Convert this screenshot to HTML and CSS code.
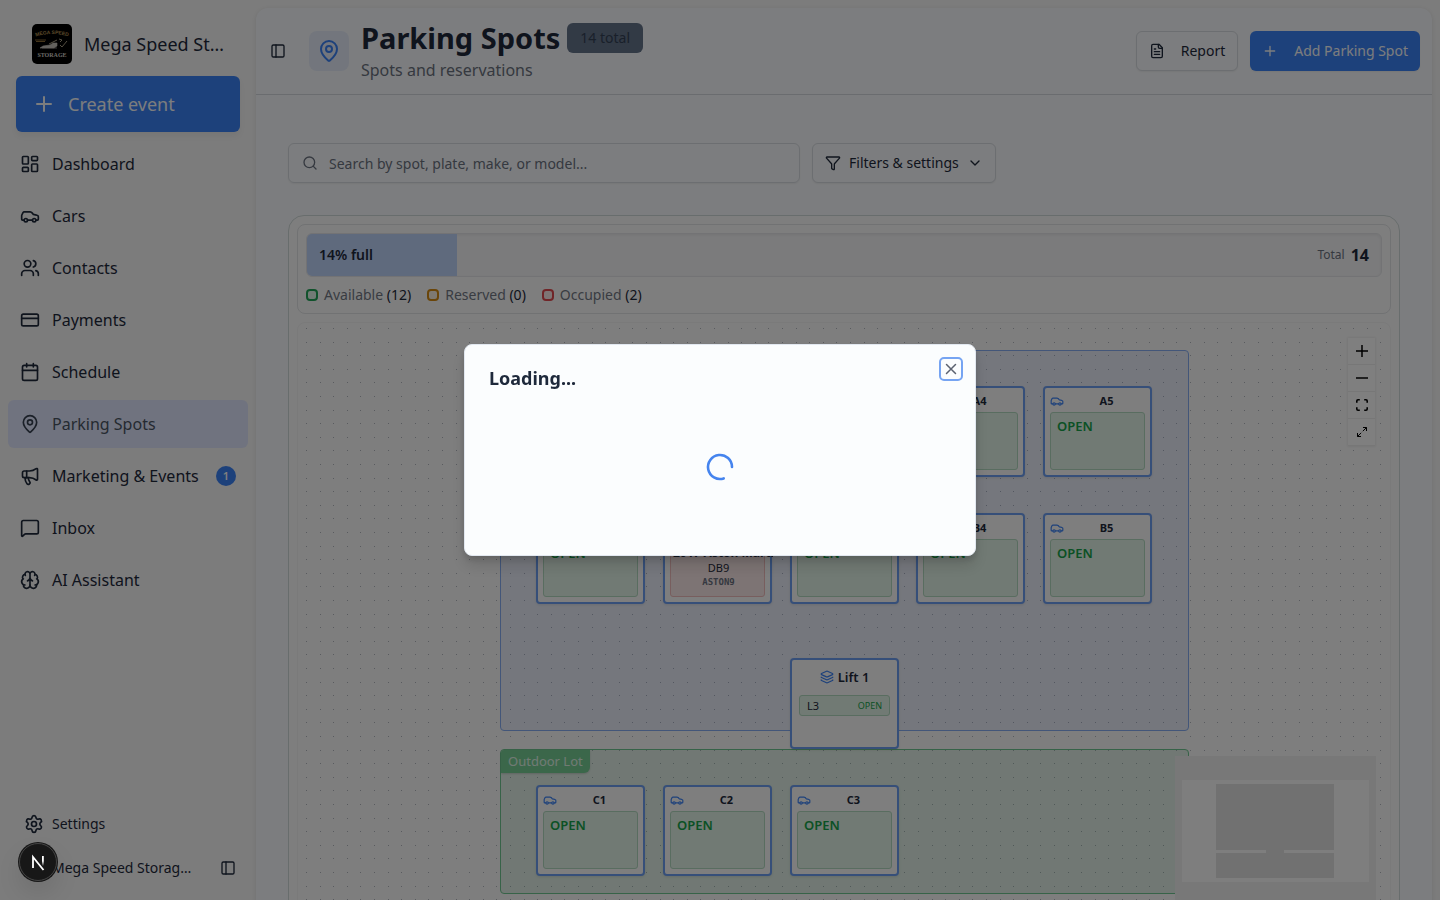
FILE: index.html
```html
<!DOCTYPE html>
<html lang="en">
<head>
<meta charset="utf-8">
<meta name="viewport" content="width=device-width, initial-scale=1">
<title>Parking Spots</title>
<link rel="stylesheet" href="styles.css">
</head>
<body>
<svg class="sprite" aria-hidden="true">
  <symbol id="i-plus" viewBox="0 0 24 24"><path d="M5 12h14M12 5v14"/></symbol>
  <symbol id="i-dashboard" viewBox="0 0 24 24"><rect width="7" height="9" x="3" y="3" rx="1"/><rect width="7" height="5" x="14" y="3" rx="1"/><rect width="7" height="9" x="14" y="12" rx="1"/><rect width="7" height="5" x="3" y="16" rx="1"/></symbol>
  <symbol id="i-car" viewBox="0 0 24 24"><path d="M19 17h2c.6 0 1-.4 1-1v-3c0-.9-.7-1.7-1.5-1.9C18.7 10.6 16 10 16 10s-1.3-1.4-2.2-2.3c-.5-.4-1.1-.7-1.8-.7H5c-.6 0-1.1.4-1.4.9l-1.4 2.9A3.7 3.7 0 0 0 2 12v4c0 .6.4 1 1 1h2"/><circle cx="7" cy="17" r="2"/><path d="M9 17h6"/><circle cx="17" cy="17" r="2"/></symbol>
  <symbol id="i-users" viewBox="0 0 24 24"><path d="M16 21v-2a4 4 0 0 0-4-4H6a4 4 0 0 0-4 4v2"/><circle cx="9" cy="7" r="4"/><path d="M22 21v-2a4 4 0 0 0-3-3.87M16 3.13a4 4 0 0 1 0 7.75"/></symbol>
  <symbol id="i-card" viewBox="0 0 24 24"><rect width="20" height="14" x="2" y="5" rx="2"/><path d="M2 10h20"/></symbol>
  <symbol id="i-calendar" viewBox="0 0 24 24"><path d="M8 2v4M16 2v4M3 10h18"/><rect width="18" height="18" x="3" y="4" rx="2"/></symbol>
  <symbol id="i-pin" viewBox="0 0 24 24"><path d="M20 10c0 4.993-5.539 10.193-7.399 11.799a1 1 0 0 1-1.202 0C9.539 20.193 4 14.993 4 10a8 8 0 0 1 16 0"/><circle cx="12" cy="10" r="3"/></symbol>
  <symbol id="i-megaphone" viewBox="0 0 24 24"><path d="M11 6a13 13 0 0 0 8.4-2.8A1 1 0 0 1 21 4v12a1 1 0 0 1-1.6.8A13 13 0 0 0 11 14H5a2 2 0 0 1-2-2V8a2 2 0 0 1 2-2z"/><path d="M6 14a12 12 0 0 0 2.4 7.2 2 2 0 0 0 3.2-2.4A8 8 0 0 1 10 14M8 6v8"/></symbol>
  <symbol id="i-message" viewBox="0 0 24 24"><path d="M22 17a2 2 0 0 1-2 2H6.828a2 2 0 0 0-1.414.586l-2.202 2.202A.71.71 0 0 1 2 21.286V5a2 2 0 0 1 2-2h16a2 2 0 0 1 2 2z"/></symbol>
  <symbol id="i-brain" viewBox="0 0 24 24"><path d="M12 18V5M15 13a4.17 4.17 0 0 1-3-4 4.17 4.17 0 0 1-3 4M17.598 6.5A3 3 0 1 0 12 5a3 3 0 1 0-5.598 1.5M17.997 5.125a4 4 0 0 1 2.526 5.77M18 18a4 4 0 0 0 2-7.464"/><path d="M19.967 17.483A4 4 0 1 1 12 18a4 4 0 1 1-7.967-.517M6 18a4 4 0 0 1-2-7.464M6.003 5.125a4 4 0 0 0-2.526 5.77"/></symbol>
  <symbol id="i-settings" viewBox="0 0 24 24"><path d="M9.671 4.136a2.34 2.34 0 0 1 4.659 0 2.34 2.34 0 0 0 3.319 1.915 2.34 2.34 0 0 1 2.33 4.033 2.34 2.34 0 0 0 0 3.831 2.34 2.34 0 0 1-2.33 4.033 2.34 2.34 0 0 0-3.319 1.915 2.34 2.34 0 0 1-4.659 0 2.34 2.34 0 0 0-3.32-1.915 2.34 2.34 0 0 1-2.33-4.033 2.34 2.34 0 0 0 0-3.831A2.34 2.34 0 0 1 6.35 6.051a2.34 2.34 0 0 0 3.319-1.915"/><circle cx="12" cy="12" r="3"/></symbol>
  <symbol id="i-panel" viewBox="0 0 24 24"><rect width="18" height="18" x="3" y="3" rx="2"/><path d="M9 3v18"/></symbol>
  <symbol id="i-file" viewBox="0 0 24 24"><path d="M15 2H6a2 2 0 0 0-2 2v16a2 2 0 0 0 2 2h12a2 2 0 0 0 2-2V7z"/><path d="M14 2v4a2 2 0 0 0 2 2h4M10 9H8M16 13H8M16 17H8"/></symbol>
  <symbol id="i-search" viewBox="0 0 24 24"><circle cx="11" cy="11" r="8"/><path d="m21 21-4.3-4.3"/></symbol>
  <symbol id="i-filter" viewBox="0 0 24 24"><path d="M10 20a1 1 0 0 0 .553.895l2 1A1 1 0 0 0 14 21v-7a2 2 0 0 1 .517-1.341L21.74 4.67A1 1 0 0 0 21 3H3a1 1 0 0 0-.742 1.67l7.225 7.989A2 2 0 0 1 10 14z"/></symbol>
  <symbol id="i-chevron" viewBox="0 0 24 24"><path d="m6 9 6 6 6-6"/></symbol>
  <symbol id="i-layers" viewBox="0 0 24 24"><path d="M12.83 2.18a2 2 0 0 0-1.66 0L2.6 6.08a1 1 0 0 0 0 1.83l8.58 3.91a2 2 0 0 0 1.66 0l8.58-3.9a1 1 0 0 0 0-1.83z"/><path d="M2 12a1 1 0 0 0 .58.91l8.6 3.91a2 2 0 0 0 1.65 0l8.58-3.9A1 1 0 0 0 22 12"/><path d="M2 17a1 1 0 0 0 .58.91l8.6 3.91a2 2 0 0 0 1.65 0l8.58-3.9A1 1 0 0 0 22 17"/></symbol>
  <symbol id="i-x" viewBox="0 0 24 24"><path d="M18 6 6 18M6 6l12 12"/></symbol>
</svg>

<div class="app">
  <aside class="sidebar">
    <div class="brand">
      <svg class="brand-logo" viewBox="0 0 40 40" role="img" aria-label="Mega Speed Storage logo">
        <rect width="40" height="40" rx="5" fill="#000"/>
        <path id="arc" d="M2 13Q20 7 38 13" fill="none"/>
        <text class="logo-top" text-anchor="middle"><textPath href="#arc" startOffset="50%">MEGA SPEED</textPath></text>
        <path d="M3 16h11M4 17.500h9" stroke="#8a6a35" stroke-width="1"/>
        <path d="M8 24l3-2 7-1 3-2h4v3l-3 2zM10 24h15" fill="#c9c5bd" stroke="#c9c5bd" stroke-width=".6"/>
        <path d="M17 20l8-4M27 15l3 1-2 2M28 21l2 2 5-6" fill="none" stroke="#a89f85" stroke-width="1"/>
        <text class="logo-bottom" x="20" y="33" text-anchor="middle">STORAGE</text>
      </svg>
      <span class="brand-name">Mega Speed Storage</span>
    </div>
    <button class="create" type="button"><svg class="icon i24"><use href="#i-plus"/></svg>Create event</button>
    <nav class="nav">
      <a href="#"><svg class="icon i20"><use href="#i-dashboard"/></svg>Dashboard</a>
      <a href="#"><svg class="icon i20"><use href="#i-car"/></svg>Cars</a>
      <a href="#"><svg class="icon i20"><use href="#i-users"/></svg>Contacts</a>
      <a href="#"><svg class="icon i20"><use href="#i-card"/></svg>Payments</a>
      <a href="#"><svg class="icon i20"><use href="#i-calendar"/></svg>Schedule</a>
      <a href="#" class="active" aria-current="page"><svg class="icon i20"><use href="#i-pin"/></svg>Parking Spots</a>
      <a href="#"><svg class="icon i20"><use href="#i-megaphone"/></svg>Marketing &amp; Events<span class="count">1</span></a>
      <a href="#"><svg class="icon i20"><use href="#i-message"/></svg>Inbox</a>
      <a href="#"><svg class="icon i20"><use href="#i-brain"/></svg>AI Assistant</a>
    </nav>
    <div class="side-foot">
      <a class="settings" href="#"><svg class="icon i20"><use href="#i-settings"/></svg>Settings</a>
      <div class="account">
        <span class="account-name">Mega Speed Storage LLC</span>
        <button class="plain" type="button" aria-label="Toggle sidebar"><svg class="icon i16"><use href="#i-panel"/></svg></button>
      </div>
    </div>
  </aside>

  <main class="main">
    <header class="head">
      <button class="plain" type="button" aria-label="Toggle sidebar"><svg class="icon i16"><use href="#i-panel"/></svg></button>
      <div class="tile"><svg class="icon i24"><use href="#i-pin"/></svg></div>
      <div class="heading">
        <div class="title-row"><h1>Parking Spots</h1><span class="total-badge">14 total</span></div>
        <p>Spots and reservations</p>
      </div>
      <div class="actions">
        <button class="btn" type="button"><svg class="icon i16"><use href="#i-file"/></svg>Report</button>
        <button class="btn primary" type="button"><svg class="icon i16"><use href="#i-plus"/></svg>Add Parking Spot</button>
      </div>
    </header>

    <div class="content">
      <div class="toolbar">
        <div class="search">
          <svg class="icon i16"><use href="#i-search"/></svg>
          <input type="text" aria-label="Search parking spots" placeholder="Search by spot, plate, make, or model...">
        </div>
        <button class="btn filter" type="button"><svg class="icon i16"><use href="#i-filter"/></svg>Filters &amp; settings<svg class="icon i16"><use href="#i-chevron"/></svg></button>
      </div>

      <section class="map-card">
        <div class="stats">
          <div class="bar">
            <div class="fill" style="width:14%">14% full</div>
            <div class="bar-total">Total <strong>14</strong></div>
          </div>
          <div class="legend">
            <span><i class="sw green"></i>Available <b>(12)</b></span>
            <span><i class="sw amber"></i>Reserved <b>(0)</b></span>
            <span><i class="sw red"></i>Occupied <b>(2)</b></span>
          </div>
        </div>

        <div class="canvas">
          <svg class="dots" aria-hidden="true">
            <defs><pattern id="grid" x="8" y="5" width="68" height="68" patternUnits="userSpaceOnUse">
              <g id="dotrow" fill="#b2b6bf"><rect width="1" height="1"/><rect x="14" width="1" height="1"/><rect x="27" width="1" height="1"/><rect x="41" width="1" height="1"/><rect x="54" width="1" height="1"/></g>
              <use href="#dotrow" y="14"/><use href="#dotrow" y="27"/><use href="#dotrow" y="41"/><use href="#dotrow" y="54"/>
            </pattern></defs>
            <rect width="100%" height="100%" fill="url(#grid)"/>
          </svg>
          <div class="zone indoor"></div>
          <div class="zone outdoor"><span class="zone-name">Outdoor Lot</span></div>

          <article class="spot c4 r1"><header><svg class="icon i14"><use href="#i-car"/></svg><b>A4</b></header><div class="state">OPEN</div></article>
          <article class="spot c5 r1"><header><svg class="icon i14"><use href="#i-car"/></svg><b>A5</b></header><div class="state">OPEN</div></article>
          <article class="spot c1 r2"><header><svg class="icon i14"><use href="#i-car"/></svg><b>B1</b></header><div class="state">OPEN</div></article>
          <article class="spot c2 r2"><header><svg class="icon i14"><use href="#i-car"/></svg><b>B2</b></header><div class="state taken"><b>2017 Aston Martin</b><span>DB9</span><code>ASTON9</code></div></article>
          <article class="spot c3 r2"><header><svg class="icon i14"><use href="#i-car"/></svg><b>B3</b></header><div class="state">OPEN</div></article>
          <article class="spot c4 r2"><header><svg class="icon i14"><use href="#i-car"/></svg><b>B4</b></header><div class="state">OPEN</div></article>
          <article class="spot c5 r2"><header><svg class="icon i14"><use href="#i-car"/></svg><b>B5</b></header><div class="state">OPEN</div></article>
          <article class="spot lift c3 r3"><header><svg class="icon i14"><use href="#i-layers"/></svg><b>Lift 1</b></header><div class="level"><span>L3</span><em>OPEN</em></div></article>
          <article class="spot c1 r4"><header><svg class="icon i14"><use href="#i-car"/></svg><b>C1</b></header><div class="state">OPEN</div></article>
          <article class="spot c2 r4"><header><svg class="icon i14"><use href="#i-car"/></svg><b>C2</b></header><div class="state">OPEN</div></article>
          <article class="spot c3 r4"><header><svg class="icon i14"><use href="#i-car"/></svg><b>C3</b></header><div class="state">OPEN</div></article>

          <div class="controls">
            <button type="button" aria-label="Zoom in"><svg viewBox="0 0 12 12"><path d="M6 0v12M0 6h12" stroke="#000" stroke-width="1.500"/></svg></button>
            <button type="button" aria-label="Zoom out"><svg viewBox="0 0 12 12"><path d="M0 6h12" stroke="#000" stroke-width="1.500"/></svg></button>
            <button type="button" aria-label="Fit view"><svg viewBox="0 0 12 12"><path d="M.8 3.800V2q0-1.200 1.200-1.200h1.800M8.200.8H10q1.200 0 1.200 1.200v1.800M11.200 8.200V10q0 1.200-1.200 1.200H8.200M3.800 11.200H2Q.8 11.200.8 10V8.200" fill="none" stroke="#000" stroke-width="1.600"/></svg></button>
            <button type="button" aria-label="Full screen"><svg viewBox="0 0 12 12"><path d="M7 1.500h3.500V5M5 10.500H1.500V7M10.500 1.500 6.800 5.200M1.500 10.500l3.700-3.700" fill="none" stroke="#000"/></svg></button>
          </div>

          <svg class="minimap" viewBox="0 0 201 150" role="img" aria-label="Mini map">
            <rect width="201" height="150" fill="#f1f1f1"/>
            <rect x="7" y="24" width="187" height="102" fill="#fdfdfd"/>
            <path d="M41 28h118v66H109v3h50v25H41V97h50v-3H41z" fill="#e2e2e2"/>
          </svg>
        </div>
      </section>
    </div>
  </main>
</div>

<div class="overlay">
  <div class="dialog" role="dialog" aria-modal="true" aria-labelledby="dlg-title">
    <h2 id="dlg-title">Loading...</h2>
    <button class="close" type="button" aria-label="Close"><svg class="icon i18"><use href="#i-x"/></svg></button>
    <div class="loading"><svg class="spinner" viewBox="0 0 32 32"><path d="M28 16A12 12 0 1 0 19.700 27.400"/></svg></div>
  </div>
</div>

<button class="dev" type="button" aria-label="Developer tools">
  <svg viewBox="0 0 36 36">
    <defs><linearGradient id="fade" x1="0" y1="0" x2="0" y2="1"><stop offset=".5" stop-color="#fff"/><stop offset="1" stop-color="#fff" stop-opacity="0"/></linearGradient></defs>
    <path d="M13 24V13L23.500 26" fill="none" stroke="#fff" stroke-width="1.800"/><rect x="22" y="12" width="1.800" height="10" fill="url(#fade)"/>
  </svg>
</button>
</body>
</html>
```

FILE: styles.css
```css
* { box-sizing: border-box; }
body {
  margin: 0;
  height: 100vh;
  overflow: hidden;
  font-family: "Noto Sans", sans-serif;
  font-size: 14px;
  line-height: 20px;
  color: #1e293b;
  background: #f8f8f8;
}
button, input { font: inherit; color: inherit; }
button { cursor: pointer; }
a { color: inherit; text-decoration: none; }
h1, h2, p { margin: 0; }
.sprite { position: absolute; width: 0; height: 0; }
.icon { flex: none; fill: none; stroke: currentColor; stroke-width: 2; stroke-linecap: round; stroke-linejoin: round; }
.i14 { width: 14px; height: 14px; }
.i16 { width: 16px; height: 16px; }
.i18 { width: 18px; height: 18px; }
.i20 { width: 20px; height: 20px; }
.i24 { width: 24px; height: 24px; }
.plain { display: flex; padding: 0; border: 0; background: none; }

.app { display: flex; height: 100vh; }

/* Sidebar */
.sidebar { flex: none; width: 256px; height: 100vh; padding: 24px 8px 16px; display: flex; flex-direction: column; }
.brand { display: flex; align-items: center; gap: 12px; padding: 0 20px 0 24px; }
.brand-logo { flex: none; width: 40px; height: 40px; }
.logo-top { font: bold 5px "Liberation Sans", sans-serif; fill: #b49254; }
.logo-bottom { font: bold 6px "Liberation Serif", serif; fill: #d6d3cc; }
.brand-name { font-size: 18px; line-height: 28px; white-space: nowrap; overflow: hidden; text-overflow: ellipsis; }
.create {
  display: flex; align-items: center; gap: 12px; height: 56px; margin: 12px 8px 8px; padding: 0 16px;
  border: 0; border-radius: 6px; background: #3b82f6; color: #f8fafc; font-size: 18px; line-height: 28px;
  box-shadow: 0 4px 6px rgba(0, 0, 0, .05);
}
.nav { display: flex; flex-direction: column; gap: 4px; }
.nav a { display: flex; align-items: center; gap: 12px; height: 48px; padding: 0 12px; border-radius: 6px; font-size: 16px; line-height: 24px; }
.nav .active { background: #e0e7ff; color: #4b5563; }
.nav .active .icon { color: #374151; }
.count { margin-left: auto; width: 20px; height: 20px; border-radius: 10px; background: #3b82f6; color: #fff; font-size: 11px; line-height: 20px; font-weight: 600; text-align: center; }
.side-foot { margin-top: auto; }
.settings { display: flex; align-items: center; gap: 8px; height: 32px; padding: 0 16px; }
.account { display: flex; align-items: center; justify-content: space-between; height: 32px; margin-top: 12px; padding: 0 12px 0 44px; }
.account-name { width: 140px; white-space: nowrap; overflow: hidden; text-overflow: ellipsis; }

/* Main panel */
.main { flex: 1; min-width: 0; margin: 8px 8px 0 0; align-self: flex-start; border-radius: 12px; background: #f9fbfe; box-shadow: 0 1px 4px rgba(0, 0, 0, .1); }
.head { display: flex; align-items: center; height: 87px; padding: 0 12px 0 14px; border-bottom: 1px solid #d5d9de; }
.tile { display: flex; align-items: center; justify-content: center; width: 40px; height: 40px; margin: 0 12px 0 23px; border-radius: 8px; background: #e6edfb; color: #3b82f6; }
.title-row { display: flex; align-items: center; gap: 7px; }
h1 { font-size: 29px; line-height: 36px; font-weight: 700; }
.total-badge { padding: 5px 13px; border-radius: 6px; background: #64748b; color: #334155; }
.heading p { margin-top: 2px; font-size: 16px; line-height: 24px; color: #6b7280; }
.actions { display: flex; gap: 12px; margin-left: auto; }
.btn { display: flex; align-items: center; gap: 16px; height: 40px; padding: 0 12px; border: 1px solid #d8dce2; border-radius: 6px; background: #f9fbfe; box-shadow: 0 1px 2px rgba(0, 0, 0, .06); white-space: nowrap; }
.primary { border: 0; background: #3b82f6; color: #f8fafc; }
.content { padding: 48px 32px 0; }
.toolbar { display: flex; gap: 12px; }
.search { display: flex; align-items: center; gap: 11px; width: 512px; height: 40px; padding: 0 13px; border: 1px solid #d8dce2; border-radius: 6px; color: #6b7280; box-shadow: 0 1px 2px rgba(0, 0, 0, .06); }
.search input { flex: 1; min-width: 0; padding: 2px 0 0; border: 0; outline: 0; background: none; }
.search input::placeholder { color: #6b7280; opacity: 1; }
.filter { gap: 8px; }

/* Occupancy */
.map-card { margin-top: 32px; padding: 8px; border: 1px solid #d0dada; border-radius: 16px; background: #fdfdfd; }
.stats { padding: 8px; border: 1px solid #e2e4e6; border-radius: 8px; }
.bar { display: flex; align-items: center; height: 44px; border: 1px solid #e6e7ea; border-radius: 6px; overflow: hidden; background: #f6f6f8; box-shadow: inset 0 1px 3px rgba(0, 0, 0, .06); }
.fill { align-self: stretch; display: flex; align-items: center; padding-left: 12px; background: #bfd5fa; font-weight: 600; white-space: nowrap; }
.bar-total { display: flex; align-items: center; gap: 6px; margin-left: auto; padding-right: 12px; font-size: 12px; color: #6b7280; }
.bar-total strong { font-size: 16px; color: #1e293b; }
.legend { display: flex; gap: 16px; margin-top: 8px; color: #737985; }
.legend span { display: flex; align-items: center; white-space: pre; }
.legend b { font-weight: 400; color: #1e293b; }
.sw { width: 12px; height: 12px; margin-right: 6px; border: 2px solid; border-radius: 4px; }
.green { border-color: #22a559; background: #e5f7ec; }
.amber { border-color: #d48a12; background: #fdf3e2; }
.red { border-color: #e14b50; background: #fdeaea; }

/* Map canvas */
.canvas { position: relative; height: 680px; margin-top: 8px; border: 1px solid #f4f4f5; border-radius: 8px; overflow: hidden; }
.dots { display: block; width: 100%; height: 100%; }
.zone { position: absolute; left: 202px; width: 689px; border: 1px solid; border-radius: 4px; }
.indoor { top: 27px; height: 381px; border-color: #86adf3; background: rgba(59, 105, 220, .09); }
.outdoor { top: 426px; height: 145px; border-color: #6fc690; background: rgba(34, 160, 84, .12); }
.zone-name { display: inline-block; padding: 1px 7px 2px; border-radius: 3px 0 6px 0; background: #76cf95; color: #e2f5e9; font-size: 13px; box-shadow: 0 1px 2px rgba(0, 0, 0, .15); }
.spot { position: absolute; width: 109px; height: 91px; padding: 5px; border: 2px solid #6d9ff2; border-radius: 4px; background: #fdfdfd; box-shadow: 0 1px 3px rgba(0, 0, 0, .1); }
.c1 { left: 238px; }
.c2 { left: 365px; }
.c3 { left: 492px; }
.c4 { left: 618px; }
.c5 { left: 745px; }
.r1 { top: 63px; }
.r2 { top: 190px; }
.r3 { top: 335px; }
.r4 { top: 462px; }
.spot header { display: flex; align-items: center; gap: 4px; height: 19px; padding-bottom: 3px; color: #3b82f6; }
.spot header b { flex: 1; font-size: 11px; text-align: center; color: #1e293b; }
.state { height: 58px; padding: 3px 6px; border: 1px solid #b2dac0; border-radius: 3px; background: #e3f4e8; font-size: 13px; font-weight: 600; color: #16a34a; }
.taken { padding: 6px 0 0 2px; border-color: #f0bcbc; background: #fbe9e8; color: #1e293b; font-size: 11px; font-weight: 400; line-height: 15px; text-align: center; white-space: nowrap; }
.taken b, .taken span, .taken code { display: block; }
.taken b { width: 100px; overflow: hidden; font-size: 12px; line-height: 14px; text-align: left; }
.taken code { font: bold 9px/15px "DejaVu Sans Mono", monospace; color: #6b7280; }
.lift { padding: 8px 7px; }
.lift header { justify-content: center; height: 18px; padding: 0; }
.lift header b { flex: none; font-size: 13px; font-weight: 600; }
.level { display: flex; align-items: center; justify-content: space-between; height: 21px; margin-top: 9px; padding: 0 7px; border: 1px solid #b2dac0; border-radius: 3px; background: #e3f4e8; font-size: 11px; }
.level em { font-size: 9px; font-style: normal; color: #16a34a; }
.controls { position: absolute; top: 15px; right: 15px; width: 27px; box-shadow: 0 0 2px 1px rgba(0, 0, 0, .06); }
.controls button { display: flex; align-items: center; justify-content: center; width: 27px; height: 27px; padding: 0; border: 0; border-bottom: 1px solid #eee; background: #fefefe; }
.controls svg { width: 12px; height: 12px; }
.minimap { position: absolute; top: 433px; right: 14px; width: 201px; height: 150px; }

/* Dialog */
.overlay { position: fixed; inset: 0; display: flex; align-items: center; justify-content: center; background: rgba(0, 0, 0, .5); }
.dialog { position: relative; width: 512px; padding: 24px; border: 1px solid #e2e8f0; border-radius: 8px; background: #fbfdfe; box-shadow: 0 10px 15px rgba(0, 0, 0, .12), 0 4px 6px rgba(0, 0, 0, .12); }
.dialog h2 { font-size: 18px; line-height: 18px; font-weight: 700; }
.close { position: absolute; top: 12px; right: 12px; display: flex; align-items: center; justify-content: center; width: 24px; height: 24px; padding: 0; border: 2px solid #76a4f2; border-radius: 5px; background: #fbfdfe; color: #5b6270; }
.loading { display: flex; align-items: center; justify-content: center; height: 128px; margin-top: 16px; }
.spinner { width: 32px; height: 32px; fill: none; stroke: #4584ee; stroke-width: 2.6; stroke-linecap: round; }

.dev { position: fixed; left: 19px; bottom: 19px; width: 38px; height: 38px; padding: 0; border: 1px solid #444; border-radius: 19px; background: #171717; box-shadow: 0 0 0 1px #171717, 0 12px 24px rgba(0, 0, 0, .1); }
.dev svg { display: block; width: 36px; height: 36px; }
```
